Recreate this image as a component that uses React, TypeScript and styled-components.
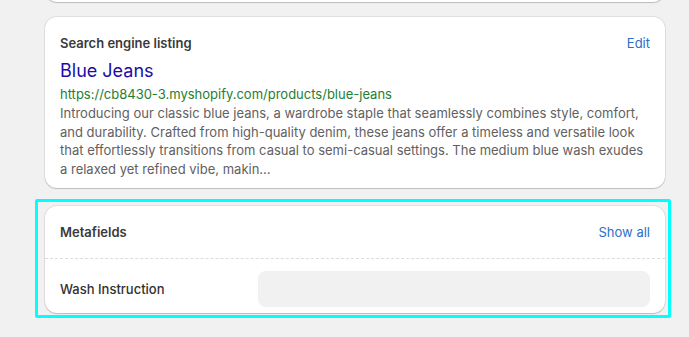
import React from "react";
import styled, { createGlobalStyle } from "styled-components";

const Global = createGlobalStyle`
  *, *::before, *::after { box-sizing: border-box; }
  html, body { margin: 0; padding: 0; background: #f1f1f1; }
  body { font-family: Inter, "Noto Sans", sans-serif; color: #303030; -webkit-font-smoothing: antialiased; }
`;

const Page = styled.div`
  display: flex;
  flex-direction: column;
  width: 689px;
  padding: 0 24px 0 45px;
  height: 337px;
  overflow: hidden;
`;

const Card = styled.section`
  background: #ffffff;
  border-radius: 12px;
  box-shadow: 0 0 0 1px rgba(0, 0, 0, 0.07), 0 1px 1px 0 rgba(0, 0, 0, 0.16);
`;

const TopCard = styled(Card)`
  height: 40px;
  margin-top: -38px;
  flex: none;
`;

const SeoCard = styled(Card)`
  margin-top: 15px;
  padding: 16px 15px 10px;
  display: flex;
  flex-direction: column;
`;

const Header = styled.div<{ $h: number }>`
  display: flex;
  align-items: center;
  justify-content: space-between;
  height: ${(p) => p.$h}px;
`;

const Title = styled.h2`
  margin: 0;
  font-size: 13px;
  line-height: 20px;
  font-weight: 600;
  color: #3a3a3a;
`;

const Link = styled.a`
  font-size: 13px;
  line-height: 20px;
  color: #2c6ecb;
  text-decoration: none;
`;

const PreviewTitle = styled.div`
  margin-top: 6px;
  font-size: 18px;
  line-height: 24px;
  color: #1a0dab;
`;

const PreviewUrl = styled.div`
  margin-top: 2px;
  font-size: 13px;
  line-height: 18px;
  color: #1e7e34;
`;

const PreviewText = styled.p`
  margin: 1px 0 0;
  font-size: 13px;
  line-height: 18.5px;
  color: #616161;
`;

const Highlight = styled.div`
  margin: 11px 0 0 -10px;
  width: 636px;
  flex: none;
  border: 3px solid #00ffff;
  border-radius: 2px;
  padding: 4px 3px 2px 7px;
`;

const MetaCard = styled(Card)`
  height: 107px;
  overflow: hidden;
  display: flex;
  flex-direction: column;
`;

const MetaHeader = styled(Header)`
  padding: 0 15px;
  border-bottom: 1px dashed #dcdcdc;
  flex: none;
`;

const FieldRow = styled.div`
  display: grid;
  grid-template-columns: 198px 1fr;
  align-items: center;
  padding: 12px 15px 6px;
`;

const FieldLabel = styled.span`
  font-size: 13px;
  line-height: 20px;
  font-weight: 500;
  color: #303030;
`;

const FieldValue = styled.div`
  height: 36px;
  border-radius: 8px;
  background: #f1f1f1;
`;

export default function App() {
  return (
    <>
      <Global />
      <Page>
        <TopCard />
        <SeoCard>
          <Header $h={20}>
            <Title>Search engine listing</Title>
            <Link href="#">Edit</Link>
          </Header>
          <PreviewTitle>Blue Jeans</PreviewTitle>
          <PreviewUrl>https://cb8430-3.myshopify.com/products/blue-jeans</PreviewUrl>
          <PreviewText>
            Introducing our classic blue jeans, a wardrobe staple that seamlessly combines style, comfort,
            and durability. Crafted from high-quality denim, these jeans offer a timeless and versatile look
            that effortlessly transitions from casual to semi-casual settings. The medium blue wash exudes
            a relaxed yet refined vibe, makin...
          </PreviewText>
        </SeoCard>
        <Highlight>
          <MetaCard>
            <MetaHeader $h={53}>
              <Title>Metafields</Title>
              <Link href="#">Show all</Link>
            </MetaHeader>
            <FieldRow>
              <FieldLabel>Wash Instruction</FieldLabel>
              <FieldValue />
            </FieldRow>
          </MetaCard>
        </Highlight>
      </Page>
    </>
  );
}
